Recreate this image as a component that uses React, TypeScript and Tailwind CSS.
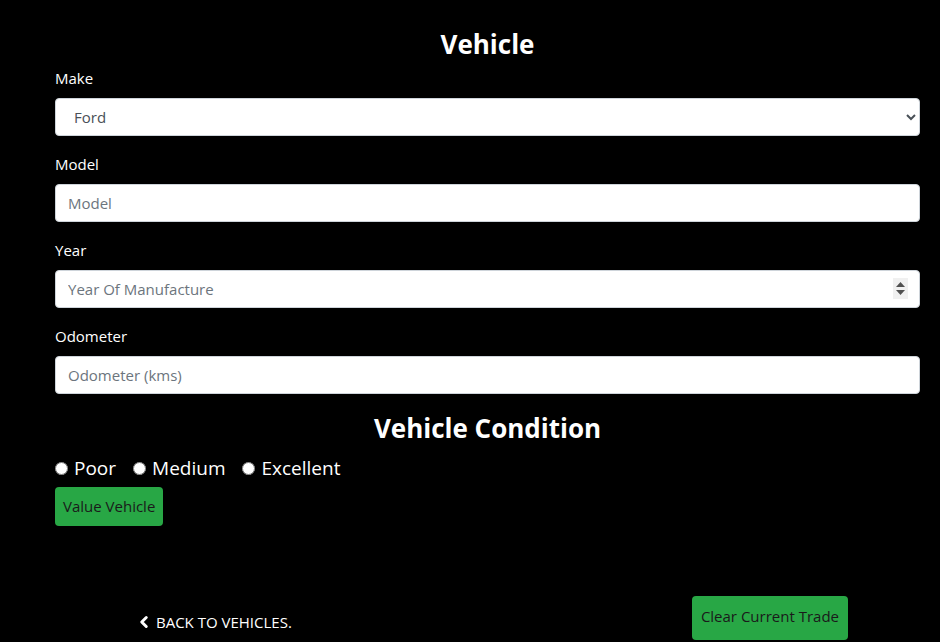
import { ChevronLeft } from 'lucide-react'

const font = { fontFamily: '"Open Sans", "Noto Sans", sans-serif' }

function Field({ label, children }: { label: string; children: React.ReactNode }) {
  return (
    <div className="mb-4">
      <label className="block mb-2 text-[15px] leading-6 text-white">{label}</label>
      {children}
    </div>
  )
}

const inputCls =
  'block w-full h-[38px] px-3 rounded border border-[#ced4da] bg-white text-[15px] text-[#495057] placeholder:text-[#6c757d] outline-none'

export default function App() {
  return (
    <div className="min-h-[642px] bg-black text-white" style={font}>
      <div className="mx-[55px] w-[865px] pt-[22px]">
        <h3 className="text-center text-[26px] font-bold leading-9 mt-1 mb-1">Vehicle</h3>

        <Field label="Make">
          <select className={inputCls + ' pl-[14px]'} defaultValue="Ford">
            <option>Ford</option>
            <option>Holden</option>
            <option>Toyota</option>
          </select>
        </Field>
        <Field label="Model">
          <input className={inputCls} placeholder="Model" />
        </Field>
        <Field label="Year">
          <div className="relative">
            <input type="number" className={inputCls} placeholder="Year Of Manufacture" />
            {/* spinner as shown by the browser */}
            <div className="absolute right-[12px] top-[8px] w-[15px] h-[21px] bg-[#f0f0f0] flex flex-col items-center justify-center gap-[3px]">
              <svg width="9" height="5" viewBox="0 0 9 5"><path d="M4.5 0L9 5H0z" fill="#505050" /></svg>
              <svg width="9" height="5" viewBox="0 0 9 5"><path d="M0 0h9L4.5 5z" fill="#505050" /></svg>
            </div>
          </div>
        </Field>
        <Field label="Odometer">
          <input className={inputCls} placeholder="Odometer (kms)" />
        </Field>

        <h3 className="text-center text-[26px] font-bold leading-9">Vehicle Condition</h3>

        <div className="flex items-center gap-[17px] text-[19px] leading-7 mt-[8px]">
          {['Poor', 'Medium', 'Excellent'].map((c) => (
            <label key={c} className="flex items-center gap-[6px]">
              <input type="radio" name="condition" className="w-[13px] h-[13px] m-0" />
              <span>{c}</span>
            </label>
          ))}
        </div>

        <button className="mt-[5px] h-[39px] px-2 rounded bg-[#28a745] text-[15px] text-[#1a1a1a]">
          Value Vehicle
        </button>

        <div className="flex items-end mt-[70px]">
          <a className="ml-[80px] mb-[7px] flex items-center gap-[3px] text-[15px] uppercase text-white">
            <ChevronLeft size={18} strokeWidth={4} />
            Back to vehicles.
          </a>
          <button className="ml-auto mr-[72px] h-[44px] px-[9px] pb-[3px] rounded bg-[#28a745] text-[15px] text-[#1a1a1a]">
            Clear Current Trade
          </button>
        </div>
      </div>
    </div>
  )
}
